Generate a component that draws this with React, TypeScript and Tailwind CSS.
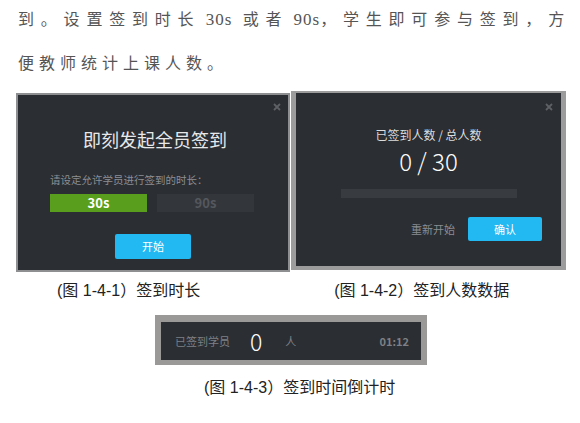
import React from "react";

const ui = "font-['Noto_Sans_CJK_SC','Noto_Sans',sans-serif]";
const cap = "font-['Liberation_Sans','Noto_Sans_CJK_SC',sans-serif]";

function Close({ className }: { className: string }) {
  return (
    <svg width="8" height="8" viewBox="0 0 8 8" className={className}>
      <path d="M1 1L7 7M7 1L1 7" stroke="#5d6065" strokeWidth="1.8" />
    </svg>
  );
}

function StartPanel() {
  return (
    <div className="w-[274px] h-[179px] bg-[#8e8f90] p-[2px]">
      <div className={`relative h-full bg-[#2b2e33] flex flex-col ${ui}`}>
        <Close className="absolute right-[7px] top-[8px]" />
        <div className="mt-[32px] text-center text-[18px] leading-[24px] text-[#e8e8e8] pl-[4px]">
          即刻发起全员签到
        </div>
        <div className="mt-[22px] ml-[32px] text-[10.5px] leading-[14px] text-[#8b8e93]">
          请设定允许学员进行签到的时长：
        </div>
        <div className="mt-[7px] ml-[32px] flex gap-[10px]">
          <div className="w-[97px] h-[18px] bg-[#5a9e1e] flex items-center justify-center text-[13px] font-bold text-white">
            30s
          </div>
          <div className="w-[97px] h-[18px] bg-[#33363b] flex items-center justify-center text-[13px] font-bold text-[#55585d]">
            90s
          </div>
        </div>
        <div className="mt-[22px] ml-[97px] w-[76px] h-[25px] rounded-[2px] bg-[#22b8f2] flex items-center justify-center text-[11px] text-white">
          开始
        </div>
      </div>
    </div>
  );
}

function CountPanel() {
  return (
    <div className="w-[275px] h-[179px] bg-[#9c9c9d] pt-[2px] pl-[5px] pr-[5px] pb-[4px]">
      <div className={`relative h-full bg-[#2b2e33] flex flex-col items-center ${ui}`}>
        <Close className="absolute right-[8px] top-[10px]" />
        <div className="mt-[34px] text-[12px] leading-[16px] text-[#dcdcdc]">已签到人数 / 总人数</div>
        <div className="mt-[3px] text-[24px] leading-[30px] font-light text-white">0 / 30</div>
        <div className="mt-[13px] w-[176px] h-[9px] bg-[#383b40]" />
        <div className="mt-[19px] self-stretch flex items-center">
          <div className="ml-[115px] text-[11px] text-[#8a8d92]">重新开始</div>
          <div className="ml-[13px] w-[74px] h-[24px] rounded-[2px] bg-[#22b8f2] flex items-center justify-center text-[11px] text-white">
            确认
          </div>
        </div>
      </div>
    </div>
  );
}

function TimerBar() {
  return (
    <div className="w-[272px] h-[50px] bg-[#9a9998] pt-[7px] px-[6px] pb-[5px]">
      <div className={`h-full bg-[#2b2e33] flex items-center ${ui}`}>
        <div className="ml-[14px] text-[11px] text-[#7d8085]">已签到学员</div>
        <div className="ml-[20px] text-[23px] leading-none font-light text-white">0</div>
        <div className="ml-[23px] text-[11px] text-[#7d8085]">人</div>
        <div className="ml-auto mr-[12px] text-[11px] font-bold text-[#7d8085]">01:12</div>
      </div>
    </div>
  );
}

export default function App() {
  return (
    <div className="w-[580px] h-[423px] bg-white overflow-hidden">
      <div className="pl-[18px] -mt-[3px] text-[16px] leading-[42px] text-[#555] font-['Noto_Sans_CJK_SC',serif] whitespace-nowrap">
        <div className="tracking-[6.8px]">
          到。设置签到时长
          <span className="tracking-[1px] font-['Liberation_Serif',serif] text-[17px]"> 30s</span>
          {"\u00a0"}或者
          <span className="tracking-[1px] font-['Liberation_Serif',serif] text-[17px]"> 90s</span>
          ，学生即可参与签到，方
        </div>
        <div className="tracking-[5px]">便教师统计上课人数。</div>
      </div>
      <div className="mt-[10px] ml-[16px] flex gap-[1px]">
        <StartPanel />
        <div className="-mt-[2px]">
          <CountPanel />
        </div>
      </div>
      <div className={`mt-[8px] flex text-[16px] leading-[22px] text-[#222] ${cap}`}>
        <div className="ml-[57px]">(图 1-4-1）签到时长</div>
        <div className="ml-[134px]">(图 1-4-2）签到人数数据</div>
      </div>
      <div className="mt-[13px] ml-[155px]">
        <TimerBar />
      </div>
      <div className={`mt-[12px] ml-[204px] text-[16px] leading-[22px] text-[#222] ${cap}`}>
        (图 1-4-3）签到时间倒计时
      </div>
    </div>
  );
}
